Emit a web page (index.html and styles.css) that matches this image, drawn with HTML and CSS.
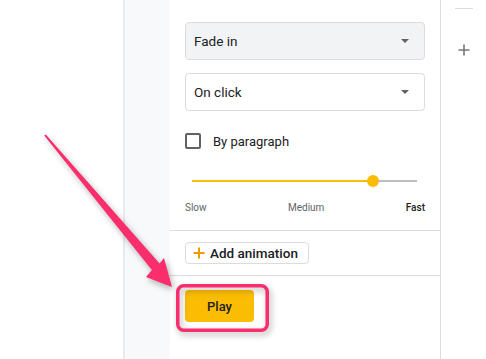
FILE: index.html
```html
<!DOCTYPE html>
<html lang="en">
<head>
    <meta charset="UTF-8">
    <meta name="viewport" content="width=device-width, initial-scale=1.0">
    <title>Animation panel</title>
    <link rel="stylesheet" href="styles.css">
</head>
<body>
    <div class="page">
        <div class="canvas"></div>
        <div class="strip"></div>

        <div class="panel">
            <div class="section">
                <div class="select select-filled">
                    <span>Fade in</span>
                    <span class="caret"></span>
                </div>
                <div class="select">
                    <span>On click</span>
                    <span class="caret"></span>
                </div>

                <label class="check-row">
                    <span class="checkbox"></span>
                    <span>By paragraph</span>
                </label>

                <div class="slider">
                    <div class="track">
                        <div class="track-fill"></div>
                        <div class="thumb"></div>
                    </div>
                </div>
                <div class="speed-labels">
                    <span>Slow</span>
                    <span>Medium</span>
                    <span class="fast">Fast</span>
                </div>
            </div>

            <div class="section section-add">
                <button class="add-button">
                    <svg width="12" height="12" viewBox="0 0 12 12">
                        <path d="M6 0.5v11M0.5 6h11" stroke="#f29900" stroke-width="2" fill="none"/>
                    </svg>
                    Add animation
                </button>
            </div>

            <div class="section section-play">
                <button class="play-button">Play</button>
            </div>
        </div>

        <div class="side">
            <div class="side-rule"></div>
            <svg class="side-plus" width="12" height="12" viewBox="0 0 12 12">
                <path d="M6 0.5v11M0.5 6h11" stroke="#757575" stroke-width="1.6" fill="none"/>
            </svg>
        </div>
    </div>

    <!-- annotation over the screenshot -->
    <svg class="annotation" width="486" height="359" viewBox="0 0 486 359">
        <polygon points="45.8,134.4 159.6,263.5 164,258 172,287 146,277 151.9,270 44.2,135.6" fill="#fa2d6d"/>
        <rect x="177.75" y="285.75" width="89.5" height="44.5" rx="6" fill="none" stroke="#fa2d6d" stroke-width="3.5"/>
    </svg>
</body>
</html>
```

FILE: styles.css
```css
:root {
    --text: #202124;
    --muted: #5f6368;
    --line: #dadce0;
    --yellow: #fbbc04;
}

* {
    box-sizing: border-box;
    margin: 0;
    padding: 0;
}

body {
    font-family: Roboto, "Noto Sans", sans-serif;
    color: var(--text);
    background: #fff;
    width: 486px;
    height: 359px;
    overflow: hidden;
    position: relative;
}

.page {
    display: flex;
    height: 359px;
}

.canvas {
    width: 123px;
    background: #fff;
}

.strip {
    width: 47px;
    background: #f8f9fa;
    border-left: 2px solid #e8eaed;
}

.panel {
    width: 271px;
    border-right: 1px solid var(--line);
    display: flex;
    flex-direction: column;
}

.section {
    padding: 0 15px;
    border-bottom: 1px solid var(--line);
}

.section:first-child {
    padding-top: 22px;
}

.select {
    height: 38px;
    border: 1px solid var(--line);
    border-radius: 4px;
    display: flex;
    align-items: center;
    justify-content: space-between;
    padding: 0 15px 0 8px;
    font-size: 13.5px;
    background: #fff;
}

.select-filled {
    background: #f1f3f4;
}

.select + .select {
    margin-top: 13px;
}

.caret {
    width: 0;
    height: 0;
    border-left: 4px solid transparent;
    border-right: 4px solid transparent;
    border-top: 4px solid #5f6368;
}

.check-row {
    display: flex;
    align-items: center;
    margin-top: 22px;
    height: 16px;
    font-size: 13px;
}

.checkbox {
    width: 16px;
    height: 16px;
    border: 2px solid var(--muted);
    border-radius: 2px;
    margin-right: 12px;
}

.slider {
    margin-top: 26px;
    padding: 0 8px 0 7px;
    height: 12px;
    display: flex;
    align-items: center;
}

.track {
    position: relative;
    width: 100%;
    height: 2px;
    background: #bdbdbd;
}

.track-fill {
    width: 80.5%;
    height: 2px;
    background: var(--yellow);
}

.thumb {
    position: absolute;
    left: 80.5%;
    top: -5px;
    width: 12px;
    height: 12px;
    margin-left: -6px;
    border-radius: 50%;
    background: var(--yellow);
}

.speed-labels {
    display: flex;
    justify-content: space-between;
    margin-top: 15px;
    padding-bottom: 16px;
    font-size: 10px;
    line-height: 12px;
    color: var(--muted);
}

.speed-labels .fast {
    color: var(--text);
    font-weight: 500;
}

.section-add {
    padding-top: 11px;
    padding-bottom: 11px;
}

.add-button {
    height: 22px;
    display: flex;
    align-items: center;
    gap: 5px;
    padding: 0 10px 0 7px;
    border: 1px solid var(--line);
    border-radius: 4px;
    background: #fff;
    font-family: inherit;
    font-size: 13.5px;
    font-weight: 500;
    color: var(--text);
}

.section-play {
    border-bottom: none;
    padding-top: 14px;
}

.play-button {
    width: 69px;
    height: 32px;
    border: none;
    border-radius: 4px;
    background: var(--yellow);
    font-family: inherit;
    font-size: 13px;
    font-weight: 500;
    color: var(--text);
}

.side {
    flex: 1;
    display: flex;
    flex-direction: column;
    align-items: center;
}

.side-rule {
    margin-top: 8px;
    width: 18px;
    height: 1px;
    background: var(--line);
}

.side-plus {
    margin-top: 35px;
}

.annotation {
    position: absolute;
    left: 0;
    top: 0;
    filter: drop-shadow(2px 3px 3px rgba(0, 0, 0, 0.3));
}
```
